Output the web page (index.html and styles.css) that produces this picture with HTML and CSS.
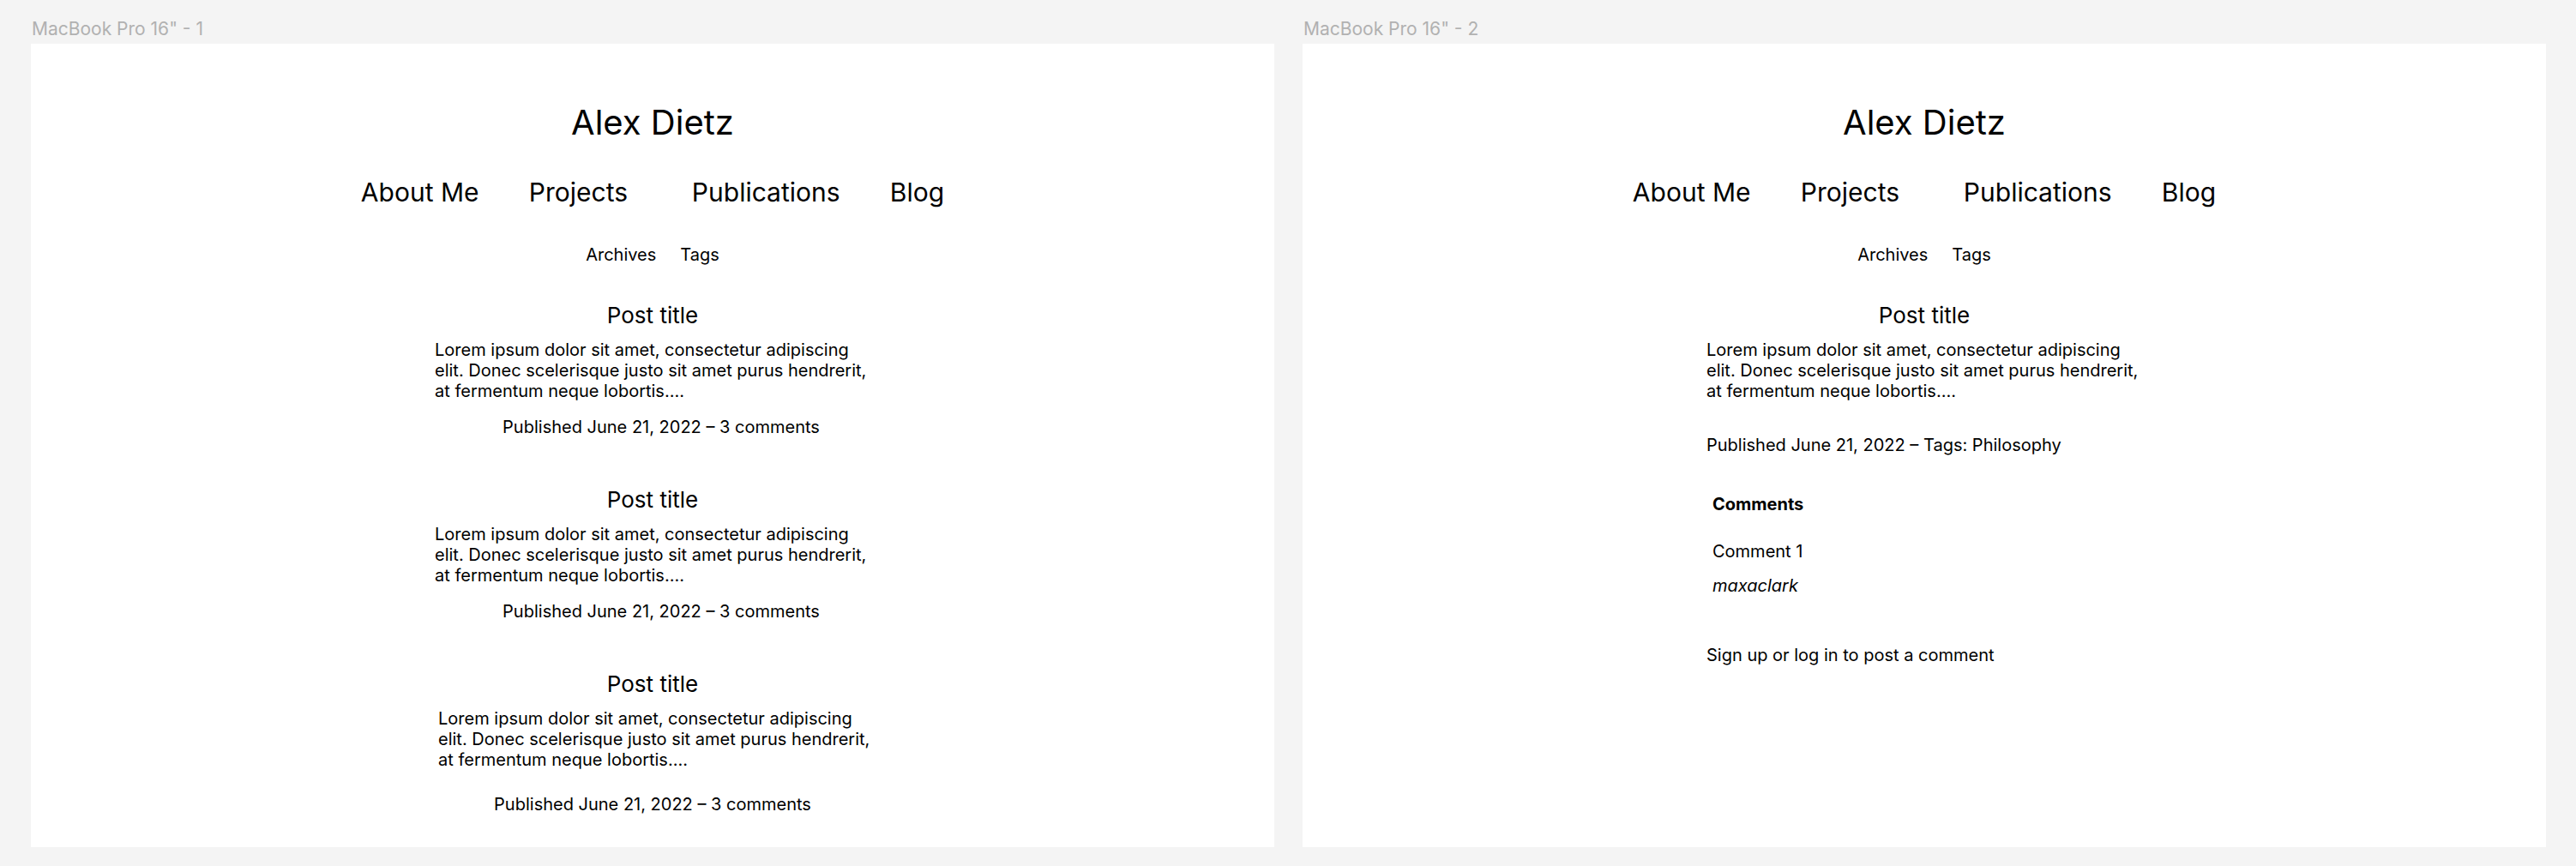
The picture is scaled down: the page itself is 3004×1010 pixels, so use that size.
FILE: index.html
```html
<!DOCTYPE html>
<html lang="en">
<head>
<meta charset="utf-8">
<title>Alex Dietz – mockups</title>
<link rel="stylesheet" href="styles.css">
</head>
<body>
<div class="canvas">
  <section class="board">
    <div class="board-label">MacBook Pro 16" - 1</div>
    <div class="frame">
      <header class="site-header">
        <h1 class="site-title">Alex Dietz</h1>
        <nav class="main-nav">
          <a href="#">About Me</a>
          <a href="#">Projects</a>
          <a href="#">Publications</a>
          <a href="#">Blog</a>
        </nav>
        <nav class="sub-nav">
          <a href="#">Archives</a>
          <a href="#">Tags</a>
        </nav>
      </header>
      <main class="posts">
        <article class="post">
          <h2 class="post-title">Post title</h2>
          <p class="post-excerpt">Lorem ipsum dolor sit amet, consectetur adipiscing<br>elit. Donec scelerisque justo sit amet purus hendrerit,<br>at fermentum neque lobortis....</p>
          <p class="post-meta">Published June 21, 2022 – 3 comments</p>
        </article>
        <article class="post">
          <h2 class="post-title">Post title</h2>
          <p class="post-excerpt">Lorem ipsum dolor sit amet, consectetur adipiscing<br>elit. Donec scelerisque justo sit amet purus hendrerit,<br>at fermentum neque lobortis....</p>
          <p class="post-meta">Published June 21, 2022 – 3 comments</p>
        </article>
        <article class="post post--last">
          <h2 class="post-title">Post title</h2>
          <p class="post-excerpt">Lorem ipsum dolor sit amet, consectetur adipiscing<br>elit. Donec scelerisque justo sit amet purus hendrerit,<br>at fermentum neque lobortis....</p>
          <p class="post-meta">Published June 21, 2022 – 3 comments</p>
        </article>
      </main>
    </div>
  </section>

  <section class="board">
    <div class="board-label">MacBook Pro 16" - 2</div>
    <div class="frame">
      <header class="site-header">
        <h1 class="site-title">Alex Dietz</h1>
        <nav class="main-nav">
          <a href="#">About Me</a>
          <a href="#">Projects</a>
          <a href="#">Publications</a>
          <a href="#">Blog</a>
        </nav>
        <nav class="sub-nav">
          <a href="#">Archives</a>
          <a href="#">Tags</a>
        </nav>
      </header>
      <main class="post-detail">
        <h2 class="post-title">Post title</h2>
        <p class="post-body">Lorem ipsum dolor sit amet, consectetur adipiscing<br>elit. Donec scelerisque justo sit amet purus hendrerit,<br>at fermentum neque lobortis....</p>
        <p class="detail-meta">Published June 21, 2022 – Tags: Philosophy</p>
        <section class="comments">
          <h3 class="comments-heading">Comments</h3>
          <p class="comment-text">Comment 1</p>
          <p class="comment-author">maxaclark</p>
        </section>
        <p class="comment-cta">Sign up or log in to post a comment</p>
      </main>
    </div>
  </section>
</div>
</body>
</html>
```

FILE: styles.css
```css
* {
  box-sizing: border-box;
}

body {
  margin: 0;
  background: #f4f4f4;
  font-family: Inter, "Noto Sans", "Liberation Sans", sans-serif;
  color: #000;
}

a {
  color: inherit;
  text-decoration: none;
}

.canvas {
  display: flex;
  gap: 33px;
  padding: 22px 0 0 36px;
}

.board-label {
  font-size: 21px;
  line-height: 24px;
  color: #b1b1b1;
  margin-bottom: 5px;
  padding-left: 1px;
}

.frame {
  width: 1450px;
  height: 937px;
  background: #fff;
  padding-top: 68px;
  display: flex;
  flex-direction: column;
  align-items: center;
}

.site-header {
  display: flex;
  flex-direction: column;
  align-items: center;
}

.site-title {
  margin: 0;
  font-size: 40px;
  font-weight: 400;
  line-height: 48px;
}

.main-nav {
  display: grid;
  grid-template-columns: 196px 190px 231px auto;
  margin-top: 39px;
  font-size: 30px;
  line-height: 36px;
}

.sub-nav {
  display: flex;
  gap: 28px;
  margin-top: 43px;
  font-size: 20px;
  line-height: 24px;
}

.posts {
  margin-top: 43px;
  display: flex;
  flex-direction: column;
  align-items: center;
  gap: 57px;
}

.post {
  display: flex;
  flex-direction: column;
  align-items: center;
}

.post-title {
  margin: 0 0 12px;
  font-size: 26px;
  line-height: 32px;
  font-weight: 400;
}

.post-excerpt,
.post-body {
  margin: 0;
  width: 508px;
  font-size: 20px;
  line-height: 24px;
  white-space: nowrap;
}

.post-meta {
  margin: 18px 0 0;
  padding-left: 20px;
  font-size: 20px;
  line-height: 24px;
}

.post--last .post-excerpt {
  width: 516px;
  padding-left: 8px;
}

.post--last .post-meta {
  margin-top: 28px;
  padding-left: 0;
}

/* detail page */
.post-detail {
  margin-top: 43px;
  width: 508px;
  display: flex;
  flex-direction: column;
  font-size: 20px;
  line-height: 24px;
}

.post-detail .post-title {
  align-self: center;
}

.detail-meta {
  margin: 39px 0 0;
}

.comments {
  margin-top: 45px;
  padding-left: 7px;
}

.comments-heading {
  margin: 0;
  font-size: 20px;
  line-height: 24px;
  font-weight: 700;
}

.comment-text {
  margin: 31px 0 0;
}

.comment-author {
  margin: 16px 0 0;
  font-style: italic;
}

.comment-cta {
  margin: 57px 0 0;
}
```
